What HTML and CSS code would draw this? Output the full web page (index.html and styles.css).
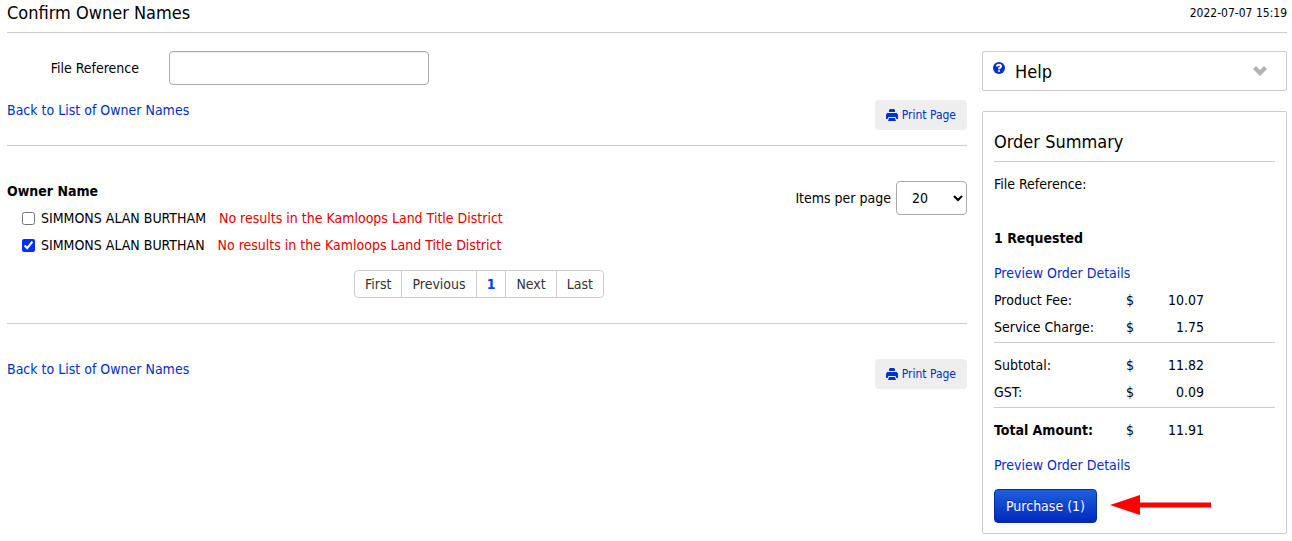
FILE: index.html
```html
<!DOCTYPE html>
<html lang="en">
<head>
<meta charset="utf-8">
<meta name="viewport" content="width=device-width, initial-scale=1">
<title>Confirm Owner Names</title>
<link rel="stylesheet" href="styles.css">
</head>
<body>
<svg class="sprite" aria-hidden="true">
  <symbol id="printer" viewBox="0 0 12 12">
    <path d="M4 0h4l1 1v2H3V1z"/>
    <path d="M2 4h8V3.500L12 5.500V10h-1.500L9.500 8h-7L1.500 10H0V5.500L2 3.500z"/>
    <path d="M3 9h6l1 3H2z"/>
  </symbol>
</svg>
<div class="page">
  <header class="page-header">
    <h1 class="page-title">Confirm Owner Names</h1>
    <time class="timestamp" datetime="2022-07-07T15:19">2022-07-07 15:19</time>
  </header>
  <div class="columns">
    <main class="content">
      <div class="field">
        <label class="field-label" for="file-ref">File Reference</label>
        <input class="field-input" id="file-ref" type="text">
      </div>
      <div class="actions">
        <a class="link" href="#list">Back to List of Owner Names</a>
        <button class="print-button" type="button"><svg class="print-icon" aria-hidden="true"><use href="#printer"/></svg>Print Page</button>
      </div>
      <section class="owners">
        <div class="owners-top">
          <div class="owner-list">
            <h2 class="owners-heading">Owner Name</h2>
            <div class="owner">
              <input class="check" id="owner-1" type="checkbox">
              <label for="owner-1">SIMMONS ALAN BURTHAM</label>
              <span class="warning">No results in the Kamloops Land Title District</span>
            </div>
            <div class="owner">
              <input class="check" id="owner-2" type="checkbox" checked>
              <label for="owner-2">SIMMONS ALAN BURTHAN</label>
              <span class="warning">No results in the Kamloops Land Title District</span>
            </div>
          </div>
          <div class="page-size">
            <label for="page-size">Items per page</label>
            <select class="page-size-select" id="page-size"><option>20</option></select>
          </div>
        </div>
        <nav class="pager-row" aria-label="Pages">
          <div class="pager">
            <a class="pager-item" href="#first">First</a>
            <a class="pager-item" href="#previous">Previous</a>
            <a class="pager-item pager-current" href="#page-1" aria-current="page">1</a>
            <a class="pager-item" href="#next">Next</a>
            <a class="pager-item" href="#last">Last</a>
          </div>
        </nav>
      </section>
      <div class="actions actions-bottom">
        <a class="link" href="#list">Back to List of Owner Names</a>
        <button class="print-button" type="button"><svg class="print-icon" aria-hidden="true"><use href="#printer"/></svg>Print Page</button>
      </div>
    </main>
    <aside class="sidebar">
      <button class="help" type="button">
        <svg class="help-icon" viewBox="0 0 12 12" aria-hidden="true"><circle class="help-disc" cx="6" cy="6" r="6"/><path class="help-mark" d="M4 4.500C4 2.200 8 2.300 8 4.400C8 5.700 6 5.500 6 7.200M6 8.200V9.800"/></svg>
        <span class="help-text">Help</span>
        <svg class="help-chevron" viewBox="0 0 14 10" aria-hidden="true"><path d="M0 3l3-3L7 4l4-4L14 3L7 10z"/></svg>
      </button>
      <section class="summary">
        <h2 class="summary-title">Order Summary</h2>
        <p class="summary-file">File Reference:</p>
        <p class="summary-count">1 Requested</p>
        <a class="link" href="#details">Preview Order Details</a>
        <table class="fees">
          <tbody>
            <tr><th scope="row">Product Fee:</th><td>$</td><td class="amount">10.07</td><td></td></tr>
            <tr><th scope="row">Service Charge:</th><td>$</td><td class="amount">1.75</td><td></td></tr>
          </tbody>
          <tbody class="fees-group">
            <tr><th scope="row">Subtotal:</th><td>$</td><td class="amount">11.82</td><td></td></tr>
            <tr><th scope="row">GST:</th><td>$</td><td class="amount">0.09</td><td></td></tr>
          </tbody>
          <tbody class="fees-group">
            <tr><th class="total" scope="row">Total Amount:</th><td>$</td><td class="amount">11.91</td><td></td></tr>
          </tbody>
        </table>
        <a class="link" href="#details">Preview Order Details</a>
        <div class="purchase-row">
          <button class="purchase" type="button">Purchase (1)</button>
          <svg class="arrow" viewBox="0 0 101 20" aria-hidden="true"><path d="M0 10L30 0V7.500H101V12.500H30V20z"/></svg>
        </div>
      </section>
    </aside>
  </div>
</div>
</body>
</html>
```
FILE: styles.css
```css
* { box-sizing: border-box; }
body {
  margin: 0;
  background: #fff;
  color: #000;
  font: 14px/27px "DejaVu Sans Condensed", "Noto Sans", sans-serif;
}
h1, h2, p { margin: 0; }
button, input, select { font: inherit; color: inherit; }
.sprite { display: none; }
.page { padding: 0 5px 0 7px; }
.page-header {
  display: flex;
  justify-content: space-between;
  height: 33px;
  border-bottom: 1px solid #ccc;
}
.page-title { font-size: 18px; font-weight: 400; line-height: 25px; }
.timestamp { font-size: 12px; }
.columns {
  display: grid;
  grid-template-columns: 1fr 305px;
  gap: 15px;
  align-items: start;
  padding-top: 18px;
}
.field { display: flex; align-items: center; gap: 30px; }
.field-label { width: 132px; text-align: right; }
.field-input {
  width: 260px;
  height: 34px;
  padding: 0 12px;
  border: 1px solid #aaa;
  border-radius: 4px;
  box-shadow: inset 0 1px 1px #eee;
}
.link { color: #0030c0; text-decoration: none; }
.actions {
  display: flex;
  justify-content: space-between;
  align-items: flex-start;
  padding: 12px 0 15px;
  border-bottom: 1px solid #ccc;
}
.print-button {
  display: flex;
  align-items: center;
  gap: 4px;
  height: 30px;
  margin-top: 3px;
  padding: 0 11px;
  border: 0;
  border-radius: 4px;
  background: #eee;
  color: #0030c0;
  font-size: 12px;
}
.print-icon { width: 12px; height: 12px; fill: #0030d0; }
.owners { padding: 32px 0 25px; border-bottom: 1px solid #ccc; }
.owners-top { display: flex; justify-content: space-between; align-items: flex-start; }
.owners-heading { font-size: 14px; }
.owner { display: flex; align-items: center; padding-left: 15px; }
.check { width: 13px; height: 13px; margin: 0 6px 0 0; accent-color: #0030ff; }
.warning { margin-left: 13px; color: #e00000; }
.page-size { display: flex; align-items: center; gap: 5px; padding-top: 3px; }
.page-size-select {
  width: 71px;
  height: 34px;
  padding: 0 0 0 11px;
  border: 1px solid #aaa;
  border-radius: 4px;
  background: #fff;
}
.pager-row { display: flex; justify-content: center; padding: 11px 16px 0 0; }
.pager { display: flex; border: 1px solid #ccc; border-radius: 4px; }
.pager-item { padding: 0 10px; color: #333; line-height: 26px; text-decoration: none; }
.pager-item + .pager-item { border-left: 1px solid #ccc; }
.pager-current { color: #0044e0; font-weight: 700; }
.actions-bottom { padding-top: 32px; border-bottom: 0; }
.sidebar { display: grid; gap: 20px; }
.help {
  display: flex;
  align-items: center;
  height: 40px;
  padding: 0 19px 0 10px;
  border: 1px solid #ccc;
  border-radius: 2px;
  background: #fff;
  text-align: left;
}
.help-icon { width: 12px; height: 12px; margin: 0 10px 6px 0; }
.help-disc { fill: #0030d0; }
.help-mark { fill: none; stroke: #fff; stroke-width: 2; }
.help-text { flex: 1; font-size: 18px; }
.help-chevron { width: 14px; height: 10px; fill: #b4b4b4; }
.summary { padding: 16px 11px 10px; border: 1px solid #ccc; border-radius: 2px; }
.summary-title {
  padding-bottom: 6px;
  border-bottom: 1px solid #ccc;
  font-size: 18px;
  font-weight: 400;
}
.summary-file { padding-top: 9px; }
.summary-count { padding: 27px 0 8px; font-weight: 700; }
.fees { width: 100%; margin-bottom: 7px; border-spacing: 0; }
.fees th { width: 132px; padding: 0; font-weight: 400; text-align: left; }
.fees td { padding: 0; }
.fees .amount { width: 64px; text-align: right; }
.fees td:last-child { width: 71px; }
.fees .total { font-weight: 700; }
.fees tr:last-child > * { padding-bottom: 1px; }
.fees-group tr:first-child > * { padding-top: 9px; border-top: 1px solid #ccc; }
.purchase-row { display: flex; align-items: center; gap: 13px; padding-top: 10px; }
.purchase {
  height: 34px;
  padding: 0 11px;
  border: 1px solid #0030a0;
  border-radius: 4px;
  background: linear-gradient(#2060dc, #0028c0);
  color: #fff;
  text-shadow: 0 -1px 0 #0028a0;
}
.arrow { width: 101px; height: 20px; margin-bottom: 2px; fill: #f00; }
```
